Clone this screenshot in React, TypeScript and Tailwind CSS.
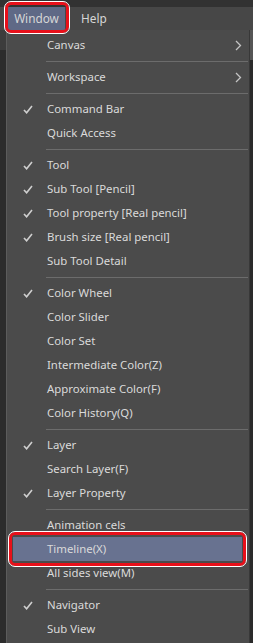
import React from 'react';

type Item = { label: string; checked?: boolean; sub?: boolean; active?: boolean } | 'sep';

const items: Item[] = [
  { label: 'Canvas', sub: true },
  'sep',
  { label: 'Workspace', sub: true },
  'sep',
  { label: 'Command Bar', checked: true },
  { label: 'Quick Access' },
  'sep',
  { label: 'Tool', checked: true },
  { label: 'Sub Tool [Pencil]', checked: true },
  { label: 'Tool property [Real pencil]', checked: true },
  { label: 'Brush size [Real pencil]', checked: true },
  { label: 'Sub Tool Detail' },
  'sep',
  { label: 'Color Wheel', checked: true },
  { label: 'Color Slider' },
  { label: 'Color Set' },
  { label: 'Intermediate Color(Z)' },
  { label: 'Approximate Color(F)' },
  { label: 'Color History(Q)' },
  'sep',
  { label: 'Layer', checked: true },
  { label: 'Search Layer(F)' },
  { label: 'Layer Property', checked: true },
  'sep',
  { label: 'Animation cels' },
  { label: 'Timeline(X)', active: true },
  { label: 'All sides view(M)' },
  'sep',
  { label: 'Navigator', checked: true },
  { label: 'Sub View' },
];

const Check = () => (
  <svg width="10" height="9" viewBox="0 0 10 9" className="text-[#cfcfcf]">
    <path d="M1 5 L3.6 7.8 L9 1" fill="none" stroke="currentColor" strokeWidth="1.6" />
  </svg>
);

const Chevron = () => (
  <svg width="7" height="11" viewBox="0 0 7 11" className="text-[#c4c4c4]">
    <path d="M1 1 L5.5 5.5 L1 10" fill="none" stroke="currentColor" strokeWidth="1.3" />
  </svg>
);

const Row: React.FC<{ item: Exclude<Item, 'sep'> }> = ({ item }) => (
  <div className="relative h-[24px] flex items-center">
    {item.active && (
      <>
        <div className="absolute left-[6px] right-[7px] top-0 bottom-0 bg-[#687290]" />
        <div className="absolute left-[2px] right-[3px] -top-[5px] -bottom-[5px] rounded-[6px] border-[3px] border-[#e8101a] outline outline-1 outline-white" />
      </>
    )}
    <div className="relative w-[40px] flex justify-center pl-[1px]">{item.checked && <Check />}</div>
    <span className="relative flex-1 text-[11.4px] text-[#dadada] whitespace-nowrap">{item.label}</span>
    {item.sub && (
      <div className="relative pr-[7px]">
        <Chevron />
      </div>
    )}
  </div>
);

export default function App() {
  return (
    <div
      className="w-[253px] h-[643px] overflow-hidden bg-[#2f2f2f] flex flex-col relative"
      style={{ fontFamily: '"Noto Sans", "Open Sans", sans-serif' }}
    >
      {/* top strip */}
      <div className="h-[7px] bg-[#323232] shrink-0" />

      {/* menu bar */}
      <div className="h-[23px] bg-[#474747] flex items-stretch shrink-0 text-[11.8px] text-[#d6d6d6]">
        <div className="relative ml-[8px] w-[57px] bg-[#5f6986] flex items-center justify-center">
          <span>Window</span>
          <div className="absolute -left-[3px] -right-[4px] -top-[5px] -bottom-[3px] rounded-[6px] border-[3px] border-[#e8101a] outline outline-1 outline-white" />
        </div>
        <div className="pl-[16px] flex items-center">Help</div>
      </div>

      <div className="flex flex-1">
        {/* left edge of the app behind the menu */}
        <div className="w-[6px] bg-[#2c2c2c] flex flex-col">
          <div className="h-[20px] bg-[#3c3c3c]" />
        </div>

        {/* dropdown */}
        <div className="flex-1 bg-[#4b4b4b] border-l border-[#5c5c5c] border-r border-r-[#383838] pt-[3px]">
          {items.map((it, i) =>
            it === 'sep' ? (
              <div key={i} className="h-[8px] flex items-center pl-[39px] pr-[1px]">
                <div className="h-px w-full bg-[#6c6c6c]" />
              </div>
            ) : (
              <Row key={i} item={it} />
            )
          )}
        </div>

        {/* right edge */}
        <div className="w-[3px] bg-[#2a2a2a] flex flex-col">
          <div className="h-[30px] bg-[#555555]" />
        </div>
      </div>
    </div>
  );
}
